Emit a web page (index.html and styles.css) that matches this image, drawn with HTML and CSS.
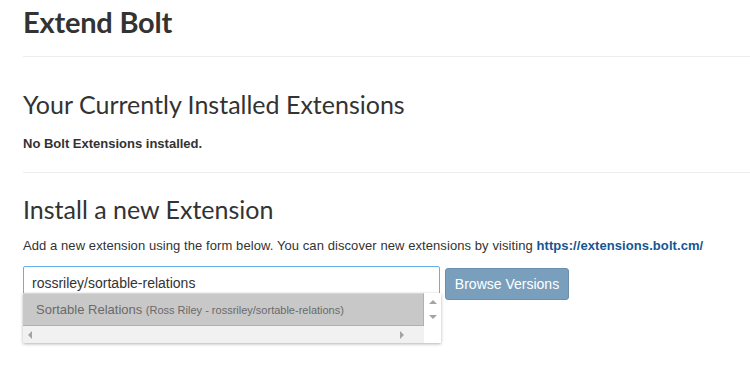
FILE: index.html
```html
<!DOCTYPE html>
<html>
<head>
<meta charset="utf-8">
<link rel="stylesheet" href="styles.css">
</head>
<body>
<div class="page">
  <h1 class="title">Extend Bolt</h1>
  <hr class="rule">
  <h2 class="section">Your Currently Installed Extensions</h2>
  <p class="none"><strong>No Bolt Extensions installed.</strong></p>
  <hr class="rule rule2">
  <h2 class="section section2">Install a new Extension</h2>
  <p class="intro">Add a new extension using the form below. You can discover new extensions by visiting <a class="link" href="#">https://extensions.bolt.cm/</a></p>
  <div class="form-row">
    <div class="field">
      <input class="input" type="text" value="rossriley/sortable-relations">
      <div class="menu">
        <div class="menu-main">
          <div class="item">Sortable Relations <span class="meta">(Ross Riley - rossriley/sortable-relations)</span></div>
          <div class="vscroll">
            <span class="arr up"></span>
            <span class="arr down"></span>
          </div>
        </div>
        <div class="hscroll">
          <div class="htrack">
            <span class="arr left"></span>
            <span class="arr right"></span>
          </div>
          <div class="corner"></div>
        </div>
      </div>
    </div>
    <button class="btn" type="button">Browse Versions</button>
  </div>
</div>
</body>
</html>
```

FILE: styles.css
```css
html, body {
  margin: 0;
  padding: 0;
  background: #fff;
}
body {
  font-family: "Liberation Sans", Arial, sans-serif;
  font-size: 13px;
  color: #333;
  min-height: 383px;
}
.page {
  padding: 0 0 0 23px;
  min-height: 383px;
  box-sizing: border-box;
}
.title {
  font-family: "Lato", "Open Sans", sans-serif;
  font-weight: 700;
  font-size: 29px;
  line-height: 33px;
  margin: 5px 0 0 0;
  color: #333;
  letter-spacing: -0.2px;
}
.rule {
  border: 0;
  border-top: 1px solid #eee;
  margin: 18px 0 0 0;
  height: 0;
}
.section {
  font-family: "Lato", "Open Sans", sans-serif;
  font-weight: 400;
  font-size: 25px;
  line-height: 28px;
  margin: 33px 0 0 0;
  color: #333;
}
.none {
  margin: 17px 0 0 0;
  font-size: 13px;
  line-height: 18px;
}
.rule2 {
  margin-top: 19px;
}
.section2 {
  margin-top: 22px;
}
.intro {
  margin: 14px 0 0 0;
  line-height: 18px;
  font-size: 13px;
  letter-spacing: 0.08px;
}
.link {
  color: #145693;
  font-weight: 700;
  text-decoration: none;
}
.form-row {
  display: flex;
  align-items: flex-start;
  margin-top: 11px;
  gap: 5px;
}
.field {
  position: relative;
  width: 417px;
}
.input {
  box-sizing: border-box;
  display: block;
  width: 417px;
  height: 34px;
  padding: 0 8px;
  border: 1px solid #66afe9;
  border-radius: 2px;
  font-family: "Liberation Sans", Arial, sans-serif;
  font-size: 14px;
  color: #333;
  outline: none;
  background: #fff;
}
.menu {
  position: absolute;
  z-index: 5;
  left: 0;
  top: 27px;
  width: 418px;
  background: #fff;
  box-shadow: 0 1px 3px rgba(0,0,0,0.3);
}
.menu-main {
  display: flex;
  height: 33px;
}
.item {
  flex: 1;
  background: #c8c8c8;
  border-top: 1px solid #d6d6d6;
  border-right: 1px solid #b0b0b0;
  border-bottom: 1px solid #b0b0b0;
  color: #6a6a6a;
  font-size: 13px;
  line-height: 31px;
  padding-left: 13px;
  white-space: nowrap;
  overflow: hidden;
}
.meta {
  font-size: 11px;
}
.vscroll {
  width: 17px;
  background: #fff;
  display: flex;
  flex-direction: column;
  align-items: center;
  justify-content: space-between;
  padding: 7px 0 7px 0;
  box-sizing: border-box;
}
.hscroll {
  display: flex;
  height: 17px;
}
.htrack {
  flex: 1;
  background: #f1f1f1;
  display: flex;
  align-items: center;
  justify-content: space-between;
  padding: 0 20px 0 5px;
}
.corner {
  width: 17px;
  background: #fff;
}
.arr {
  width: 0;
  height: 0;
  display: block;
}
.up {
  border-left: 4px solid transparent;
  border-right: 4px solid transparent;
  border-bottom: 4px solid #a3a3a3;
}
.down {
  border-left: 4px solid transparent;
  border-right: 4px solid transparent;
  border-top: 4px solid #a3a3a3;
}
.left {
  border-top: 4px solid transparent;
  border-bottom: 4px solid transparent;
  border-right: 4px solid #a3a3a3;
}
.right {
  border-top: 4px solid transparent;
  border-bottom: 4px solid transparent;
  border-left: 4px solid #a3a3a3;
}
.btn {
  margin-top: 2px;
  width: 124px;
  height: 32px;
  background: #7a9fbd;
  border: 1px solid #6a8fae;
  border-radius: 3px;
  color: #fff;
  font-family: "Liberation Sans", Arial, sans-serif;
  font-size: 14px;
  padding: 0;
}
```
